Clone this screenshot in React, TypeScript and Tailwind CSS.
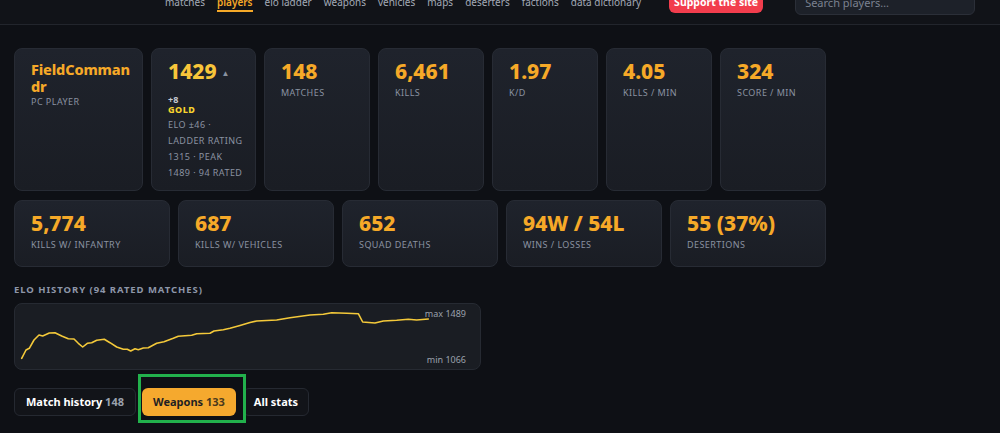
import React from 'react';

const font = { fontFamily: '"Noto Sans", "Open Sans", sans-serif' };

const navLinks = ['matches', 'players', 'elo ladder', 'weapons', 'vehicles', 'maps', 'deserters', 'factions', 'data dictionary'];

const topStats = [
  { value: '148', label: 'Matches' },
  { value: '6,461', label: 'Kills' },
  { value: '1.97', label: 'K/D' },
  { value: '4.05', label: 'Kills / min' },
  { value: '324', label: 'Score / min' },
];

const bottomStats = [
  { value: '5,774', label: 'Kills w/ infantry' },
  { value: '687', label: 'Kills w/ vehicles' },
  { value: '652', label: 'Squad deaths' },
  { value: '94W / 54L', label: 'Wins / losses' },
  { value: '55 (37%)', label: 'Desertions' },
];

// elo history, in chart box coords (467 x 67)
const eloPoints: [number, number][] = [
  [7.7, 55.3], [12, 47], [15.3, 45.3], [20, 37], [25, 32], [28.7, 33], [35.3, 30], [41, 29.7],
  [47.7, 33], [54.3, 35.7], [60, 36], [64.3, 40.3], [68.7, 44], [73.3, 40.3], [77.7, 39.7],
  [82.7, 37.3], [90.3, 36.3], [96, 39.7], [102.7, 44], [109.3, 46.3], [113.3, 46.3], [116.7, 48],
  [121, 45.7], [124.3, 46.7], [129.3, 45], [134.3, 44.7], [142.7, 40.3], [150, 38.7], [159.3, 35.3],
  [164.3, 33.3], [177.7, 32.3], [182.7, 30.7], [196, 30.3], [200, 28], [209.3, 26.7], [216, 25.3],
  [226, 22.5], [236, 19.5], [242.7, 18], [262.7, 17], [276, 14.7], [296, 12], [309.3, 11.3],
  [317.7, 9.7], [332.7, 10.3], [344.3, 10.7], [348.7, 19], [361, 20], [369.3, 18], [382.7, 17.3],
  [394.3, 16.3], [402.7, 17], [414.3, 16],
];

const cardBase = 'rounded-lg border border-[#272b34] bg-gradient-to-b from-[#1f232c] to-[#1a1d24] px-4 pt-3';
const labelCls = 'text-[9px] uppercase leading-4 tracking-wider text-[#8a92a1] whitespace-nowrap';

const StatCard = ({ value, label, className = '' }: { value: string; label: string; className?: string }) => (
  <div className={`${cardBase} ${className}`}>
    <div className="whitespace-nowrap text-[21px] font-extrabold leading-[21px] text-[#f6a928]">{value}</div>
    <div className={`mt-[3px] ${labelCls}`}>{label}</div>
  </div>
);

export default function App() {
  return (
    <div className="min-h-screen bg-[#0e1015] text-white" style={font}>
      <header className="h-[25px] overflow-hidden border-b border-[#22252c] bg-[#111318]">
        <div className="flex items-start pl-[165px]">
          <nav className="-mt-[6px] flex shrink-0 gap-[12px] whitespace-nowrap text-[10px] leading-4 text-[#a3aab6]">
            {navLinks.map((l) => (
              <span
                key={l}
                className={l === 'players' ? 'border-b-2 border-[#f6a928] font-semibold text-[#f6a928]' : ''}
              >
                {l}
              </span>
            ))}
          </nav>
          <div className="-mt-[6px] ml-[28px] flex h-[19px] w-[94px] shrink-0 items-end justify-center whitespace-nowrap rounded-b-md bg-[#f23d4d] pb-[3px] text-[10.5px] font-bold leading-4 text-white">
            Support the site
          </div>
          <div className="-mt-[6px] ml-[32px] flex h-[21px] w-[180px] shrink-0 items-end whitespace-nowrap rounded-md border border-[#2b2f38] bg-[#1d2129] px-[9px] pb-[3px] text-[11px] leading-4 text-[#7b8290]">
            Search players…
          </div>
        </div>
      </header>

      <main className="px-[14px] pt-[23px]">
        <div className="flex items-stretch gap-2">
          <div className={`${cardBase} w-[129px]`}>
            <div className="text-[14.5px] font-extrabold leading-[16.5px] tracking-[-0.01em] text-[#f6a928]">
              FieldComman<wbr />dr
            </div>
            <div className={labelCls}>PC player</div>
          </div>
          <div className={`${cardBase} w-[105px] pb-[9px]`}>
            <div className="flex items-center gap-[5px]">
              <span className="text-[21px] font-extrabold leading-[21px] text-[#f8c53a]">1429</span>
              <span className="mt-[3px] text-[8px] leading-none text-[#8a92a1]">▲</span>
            </div>
            <div className="mt-[13px] text-[9px] font-bold leading-[10px] text-[#c5cad3]">+8</div>
            <div className="text-[9px] font-extrabold leading-[10px] tracking-wider text-[#f7d22e]">GOLD</div>
            <div className={`mt-[2px] ${labelCls}`}>
              <div>ELO ±46 ·</div>
              <div>Ladder rating</div>
              <div>1315 · peak</div>
              <div>1489 · 94 rated</div>
            </div>
          </div>
          {topStats.map((s) => (
            <StatCard key={s.label} value={s.value} label={s.label} className="w-[106px]" />
          ))}
        </div>

        <div className="mt-[9px] flex gap-2">
          {bottomStats.map((s) => (
            <StatCard key={s.label} value={s.value} label={s.label} className="w-[156px] pb-[13px]" />
          ))}
        </div>

        <h3 className="mt-[15px] text-[9.5px] font-bold uppercase leading-4 tracking-widest text-[#8d96a8]">
          Elo history (94 rated matches)
        </h3>

        <div className="relative mt-[5px] h-[67px] w-[467px] rounded-lg border border-[#262a32] bg-[#1a1d23]">
          <svg className="block h-[65px] w-[465px]" viewBox="1 1 465 65" fill="none">
            <polyline
              points={eloPoints.map((p) => p.join(',')).join(' ')}
              stroke="#f4c93a"
              strokeWidth={1.6}
              strokeLinejoin="round"
              strokeLinecap="round"
            />
          </svg>
          <span className="absolute right-[14px] top-[2px] text-[9px] leading-4 text-[#9aa1ad]">max 1489</span>
          <span className="absolute bottom-[1px] right-[14px] text-[9px] leading-4 text-[#9aa1ad]">min 1066</span>
        </div>

        <div className="mt-[18px] flex gap-1.5">
          <button className="h-[28px] whitespace-nowrap rounded-md border border-[#252931] bg-[#121419] px-[11px] text-[11px] font-bold text-white">
            Match history <span className="text-[#9aa1ad]">148</span>
          </button>
          <button className="relative h-[28px] whitespace-nowrap rounded-md bg-[#f5a92e] px-[11px] text-[11px] font-bold text-[#1e1f24]">
            Weapons <span className="text-[#4a3a1c]">133</span>
            <span className="pointer-events-none absolute -bottom-[7px] -left-[4px] -right-[10px] -top-[14px] z-10 border-[3px] border-[#22b14c]" />
          </button>
          <button className="ml-[1px] h-[28px] whitespace-nowrap rounded-md border border-[#252931] bg-[#121419] px-[10px] text-[11px] font-bold text-white">
            All stats
          </button>
        </div>
      </main>
    </div>
  );
}
